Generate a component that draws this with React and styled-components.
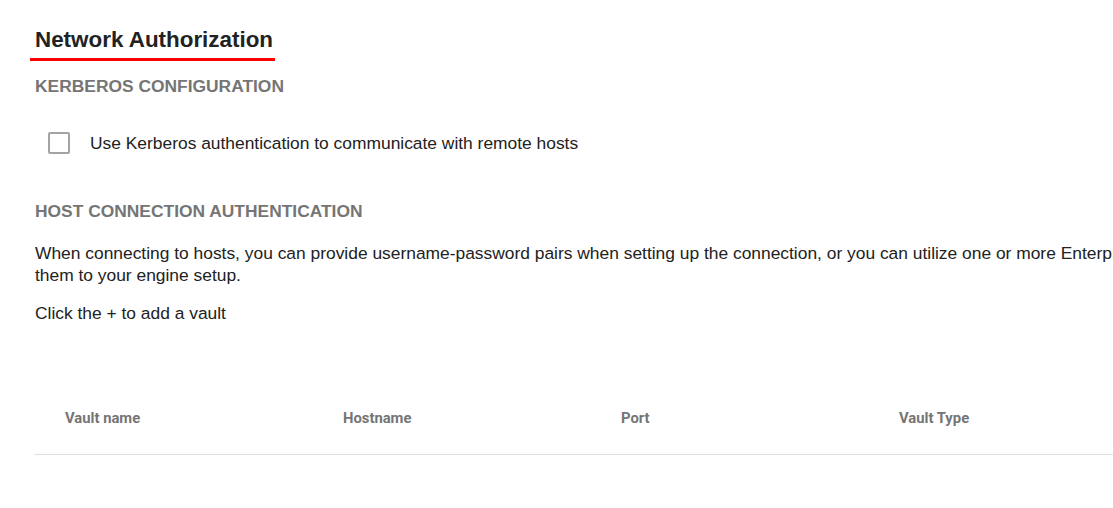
import React from "react";
import styled, { createGlobalStyle } from "styled-components";

const GlobalStyle = createGlobalStyle`
  html, body {
    margin: 0;
    padding: 0;
    background: #fff;
    overflow: hidden;
  }
  body {
    font-family: "Liberation Sans", Arial, sans-serif;
    color: #222;
  }
`;

const Page = styled.div`
  width: 1500px;
  padding: 28px 0 0 30px;
  box-sizing: border-box;
`;

const Title = styled.h2`
  display: inline-block;
  margin: 0;
  padding: 0 2px 6px 5px;
  font-size: 22.4px;
  font-weight: 700;
  line-height: 24px;
  color: #222;
  border-bottom: 3px solid #f00;
`;

const SectionTitle = styled.h3`
  margin: ${(p) => p.$top || 0}px 0 0 5px;
  font-size: 17.4px;
  font-weight: 700;
  line-height: 20px;
  color: #757575;
  text-transform: uppercase;
`;

const CheckRow = styled.label`
  display: flex;
  align-items: center;
  gap: 20px;
  margin: 36px 0 0 18px;
  font-size: 17.4px;
  line-height: 22px;
  color: #222;
  cursor: pointer;
`;

const Box = styled.span`
  width: 18px;
  height: 18px;
  border: 2px solid #a3a3a3;
  border-radius: 2px;
  flex: none;
`;

const Text = styled.p`
  margin: ${(p) => p.$top || 0}px 0 0 5px;
  font-size: 17.4px;
  line-height: 22px;
  color: #222;
`;

const Table = styled.div`
  margin: 68px 0 0 4px;
  width: 1390px;
  border-bottom: 1px solid #e0e0e0;
  display: grid;
  grid-template-columns: repeat(5, 278px);
`;

const HeadCell = styled.div`
  padding: 16px 0 26px 31px;
  font-family: Roboto, "Liberation Sans", sans-serif;
  font-size: 14.8px;
  font-weight: 700;
  line-height: 20px;
  color: #757575;
`;

const columns = ["Vault name", "Hostname", "Port", "Vault Type", ""];

export default function App() {
  return (
    <>
      <GlobalStyle />
      <Page>
        <Title>Network Authorization</Title>
        <SectionTitle $top={15}>Kerberos Configuration</SectionTitle>
        <CheckRow>
          <Box />
          Use Kerberos authentication to communicate with remote hosts
        </CheckRow>
        <SectionTitle $top={47}>Host Connection Authentication</SectionTitle>
        <Text $top={21}>
          When connecting to hosts, you can provide username-password pairs when setting up the
          connection, or you can utilize one or more Enterprise Password Vaults and add
          <br />
          them to your engine setup.
        </Text>
        <Text $top={16}>Click the + to add a vault</Text>
        <Table>
          {columns.map((c, i) => (
            <HeadCell key={i}>{c}</HeadCell>
          ))}
        </Table>
      </Page>
    </>
  );
}
